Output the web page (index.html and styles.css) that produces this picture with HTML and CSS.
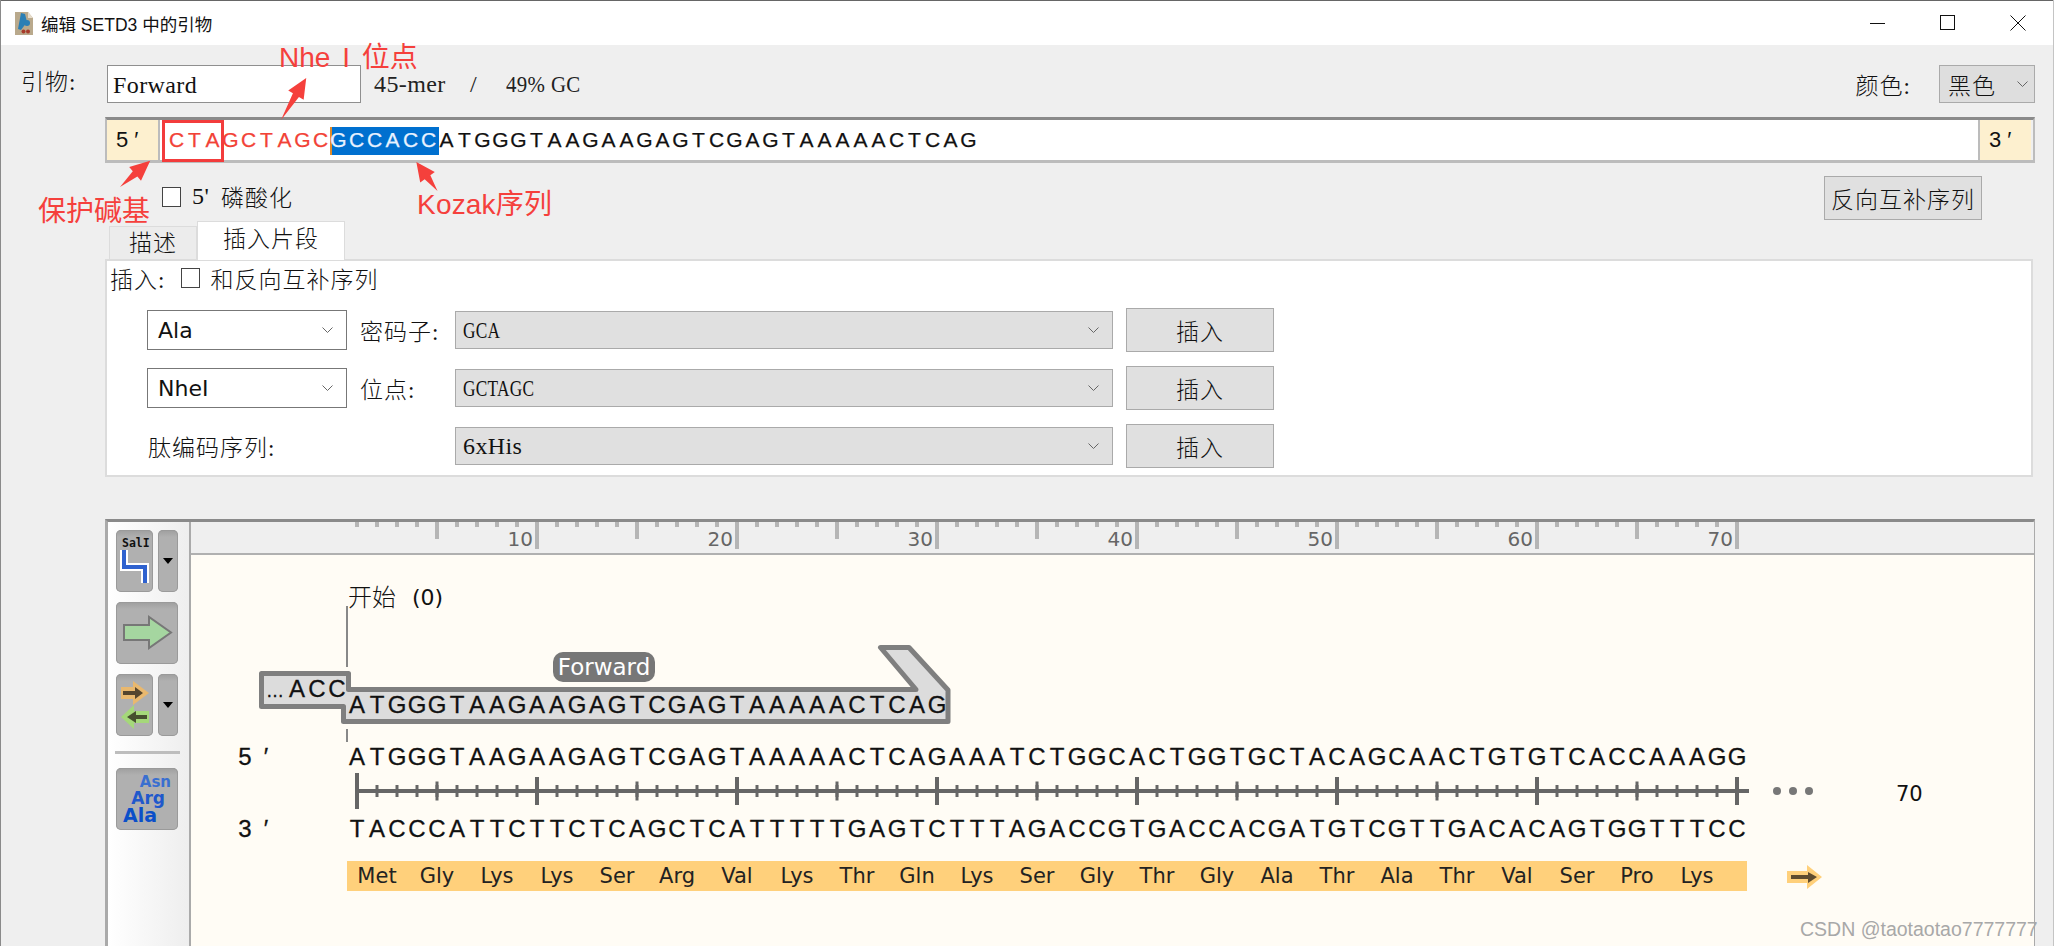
FILE: index.html
```html
<!DOCTYPE html>
<html lang="zh-CN">
<head>
<meta charset="utf-8">
<title>编辑 SETD3 中的引物</title>
<link rel="stylesheet" href="styles.css">
</head>
<body>
<div class="window">
  <header class="titlebar">
    <svg class="appicon" viewBox="15 10 18 23"><path d="M15 10h13l5 6v17H15z" fill="#b9a98c"/><path d="M28 10v6h5z" fill="#e6dccb"/><path d="M21 11l4 1 2 8-6 8-3-1z" fill="#2a7fb5"/><circle cx="27" cy="21" r="3" fill="#2a7fb5"/><circle cx="23.500" cy="29.500" r="2" fill="#a83a2a"/><circle cx="28" cy="29.500" r="2" fill="#a83a2a"/></svg>
    <span class="wintitle">编辑 SETD3 中的引物</span>
    <div class="winctl">
      <span class="winbtn"><svg viewBox="0 0 16 16"><path d="M0 8.500h15" class="glyph"/></svg></span>
      <span class="winbtn"><svg viewBox="0 0 16 16"><rect x="0.500" y="0.500" width="14" height="14" class="glyph"/></svg></span>
      <span class="winbtn"><svg viewBox="0 0 16 16"><path d="M0.500 0.500l15 15M15.500 0.500l-15 15" class="glyph"/></svg></span>
    </div>
  </header>

  <div class="toprow">
    <span class="zh toplabel">引物:</span>
    <div class="nameinput latin">Forward</div>
    <div class="meta latin"><span class="m1">45-mer</span><span class="m2">/</span><span class="cond87">49% GC</span></div>
    <span class="zh colorlabel">颜色:</span>
    <div class="colorselect"><span class="zh">黑色</span><svg class="chev" viewBox="0 0 11 6"><path d="M0.500 0.500l5 5 5-5"/></svg></div>
  </div>

  <div class="seqbar">
    <div class="endcell">5′</div>
    <svg class="seqmain" viewBox="160 120 1818 40">
      <rect x="331" y="127" width="108" height="28" class="selrect"/>
      <rect x="330" y="127" width="2" height="28" class="selcaret"/>
      <text y="147" class="barseq"><tspan class="red" x="176.500 194.500 212.500 230.500 248.500 266.500 284.500 302.500 320.500">CTAGCTAGC</tspan><tspan class="seltext" x="338.500 356.500 374.500 392.500 410.500 428.500">GCCACC</tspan><tspan x="446.500 464.500 482.500 500.500 518.500 536.500 554.500 572.500 590.500 608.500 626.500 644.500 662.500 680.500 698.500 716.500 734.500 752.500 770.500 788.500 806.500 824.500 842.500 860.500 878.500 896.500 914.500 932.500 950.500 968.500">ATGGGTAAGAAGAGTCGAGTAAAAACTCAG</tspan></text>
    </svg>
    <div class="endcell right">3′</div>
  </div>

  <div class="optrow">
    <span class="check"></span>
    <span class="latin phos">5'</span><span class="zh phoszh">磷酸化</span>
    <div class="btn revbtn zh">反向互补序列</div>
  </div>

  <div class="tabs">
    <div class="tab zh">描述</div>
    <div class="tab active zh">插入片段</div>
  </div>

  <section class="panel">
    <div class="insertrow">
      <span class="zh">插入:</span>
      <span class="check small"></span>
      <span class="zh">和反向互补序列</span>
    </div>
    <div class="insgrid">
      <div class="sel1 sans"><span>Ala</span><svg class="chev" viewBox="0 0 11 6"><path d="M0.500 0.500l5 5 5-5"/></svg></div>
      <span class="zh glabel">密码子:</span>
      <div class="sel2 latin"><span class="cond72">GCA</span><svg class="chev" viewBox="0 0 11 6"><path d="M0.500 0.500l5 5 5-5"/></svg></div>
      <div class="btn insbtn zh">插入</div>

      <div class="sel1 sans"><span>NheI</span><svg class="chev" viewBox="0 0 11 6"><path d="M0.500 0.500l5 5 5-5"/></svg></div>
      <span class="zh glabel">位点:</span>
      <div class="sel2 latin"><span class="cond72">GCTAGC</span><svg class="chev" viewBox="0 0 11 6"><path d="M0.500 0.500l5 5 5-5"/></svg></div>
      <div class="btn insbtn zh">插入</div>

      <span class="zh glabel wide">肽编码序列:</span>
      <div class="sel2 latin"><span>6xHis</span><svg class="chev" viewBox="0 0 11 6"><path d="M0.500 0.500l5 5 5-5"/></svg></div>
      <div class="btn insbtn zh">插入</div>
    </div>
  </section>

  <section class="map">
    <aside class="tools">
      <div class="toolrow">
        <div class="tool half">
          <svg viewBox="116 530 37 62">
            <text x="122" y="547" class="sal">SalI</text>
            <path d="M124 550v17h21v16" class="stepw"/>
            <path d="M124 550v17h21v16" class="stepb"/>
          </svg>
        </div>
        <div class="tool drop"><svg viewBox="0 0 10 6"><path d="M0 0h10l-5 6z"/></svg></div>
      </div>
      <div class="toolrow">
        <div class="tool full">
          <svg viewBox="116 602 62 62"><path d="M124 625h25v-8l22 15.500-22 15.500v-8h-25z" class="bigarrow"/></svg>
        </div>
      </div>
      <div class="toolrow">
        <div class="tool half">
          <svg viewBox="116 674 37 62">
            <path d="M121 687h12v-6l16 12-16 12v-6h-12z" class="oa"/>
            <path d="M123 691h12v-4l8 6-8 6v-4h-12z" class="oi"/>
            <path d="M149 711h-15v-6l-13 12 13 12v-6h15z" class="ga"/>
            <path d="M147 715h-11v-4l-9 6 9 6v-4h11z" class="gi"/>
          </svg>
        </div>
        <div class="tool drop"><svg viewBox="0 0 10 6"><path d="M0 0h10l-5 6z"/></svg></div>
      </div>
      <div class="toolsep"></div>
      <div class="toolrow">
        <div class="tool full">
          <svg viewBox="116 768 62 62">
            <text x="171" y="787" class="aa a1">Asn</text>
            <text x="165" y="804" class="aa a2">Arg</text>
            <text x="157" y="822" class="aa a3">Ala</text>
          </svg>
        </div>
      </div>
    </aside>
    <div class="mapmain">
      <svg class="ruler" viewBox="191 522 1843 31">
        <line x1="355" x2="1739" y1="524.500" y2="524.500" class="rt rt1"/>
        <line x1="435" x2="1739" y1="530.500" y2="530.500" class="rt rt5"/>
        <line x1="535" x2="1739" y1="535.500" y2="535.500" class="rt rt10"/>
        <text x="533" y="546" class="rl">10</text><text x="733" y="546" class="rl">20</text><text x="933" y="546" class="rl">30</text><text x="1133" y="546" class="rl">40</text><text x="1333" y="546" class="rl">50</text><text x="1533" y="546" class="rl">60</text><text x="1733" y="546" class="rl">70</text>
      </svg>
      <svg class="canvas" viewBox="191 555 1843 391">
        <text x="348" y="606" class="startlab">开始</text>
        <text x="412" y="605" class="startnum">(0)</text>
        <path d="M347 606v61M347 729v13" class="cursor"/>
        <path d="M261.500 673.500H348.500V689.500H916L880.500 647.500H909L948 690V721.500H343.500V706.500H261.500Z" class="feature"/>
        <text y="697" class="dna"><tspan x="275" class="ellip">…</tspan><tspan x="297 317 337">ACC</tspan></text>
        <text y="713" class="dna" x="357 377 397 417 437 457 477 497 517 537 557 577 597 617 637 657 677 697 717 737 757 777 797 817 837 857 877 897 917 937">ATGGGTAAGAAGAGTCGAGTAAAAACTCAG</text>
        <rect x="553" y="652" width="102" height="30" rx="10" class="pill"/>
        <text x="604" y="675" class="pilltext">Forward</text>

        <text y="765" class="dna" x="245 266">5′</text>
        <text y="765" class="dna" x="357 377 397 417 437 457 477 497 517 537 557 577 597 617 637 657 677 697 717 737 757 777 797 817 837 857 877 897 917 937 957 977 997 1017 1037 1057 1077 1097 1117 1137 1157 1177 1197 1217 1237 1257 1277 1297 1317 1337 1357 1377 1397 1417 1437 1457 1477 1497 1517 1537 1557 1577 1597 1617 1637 1657 1677 1697 1717 1737">ATGGGTAAGAAGAGTCGAGTAAAAACTCAGAAATCTGGCACTGGTGCTACAGCAACTGTGTCACCAAAGG</text>

        <line x1="357" x2="1749" y1="791" y2="791" class="axis"/>
        <line x1="375.500" x2="1739" y1="791" y2="791" class="at at1"/>
        <line x1="435.500" x2="1739" y1="791" y2="791" class="at at5"/>
        <line x1="535" x2="1739" y1="791" y2="791" class="at at10"/>
        <line x1="357" x2="357" y1="773" y2="809" class="at0"/>
        <circle cx="1777" cy="791" r="4" class="dot"/><circle cx="1793" cy="791" r="4" class="dot"/><circle cx="1809" cy="791" r="4" class="dot"/>
        <text x="1896" y="801" class="endnum">70</text>

        <text y="837" class="dna" x="245 266">3′</text>
        <text y="837" class="dna" x="357 377 397 417 437 457 477 497 517 537 557 577 597 617 637 657 677 697 717 737 757 777 797 817 837 857 877 897 917 937 957 977 997 1017 1037 1057 1077 1097 1117 1137 1157 1177 1197 1217 1237 1257 1277 1297 1317 1337 1357 1377 1397 1417 1437 1457 1477 1497 1517 1537 1557 1577 1597 1617 1637 1657 1677 1697 1717 1737">TACCCATTCTTCTCAGCTCATTTTTGAGTCTTTAGACCGTGACCACGATGTCGTTGACACAGTGGTTTCC</text>

        <rect x="347" y="861" width="1400" height="30" class="orf"/>
        <text y="883" class="aatext"><tspan x="377">Met</tspan><tspan x="437">Gly</tspan><tspan x="497">Lys</tspan><tspan x="557">Lys</tspan><tspan x="617">Ser</tspan><tspan x="677">Arg</tspan><tspan x="737">Val</tspan><tspan x="797">Lys</tspan><tspan x="857">Thr</tspan><tspan x="917">Gln</tspan><tspan x="977">Lys</tspan><tspan x="1037">Ser</tspan><tspan x="1097">Gly</tspan><tspan x="1157">Thr</tspan><tspan x="1217">Gly</tspan><tspan x="1277">Ala</tspan><tspan x="1337">Thr</tspan><tspan x="1397">Ala</tspan><tspan x="1457">Thr</tspan><tspan x="1517">Val</tspan><tspan x="1577">Ser</tspan><tspan x="1637">Pro</tspan><tspan x="1697">Lys</tspan></text>
        <path d="M1787 871h20v-6l15 12-15 12v-6h-20z" class="orfa"/>
        <path d="M1791 875h17v-3l9 5-9 6v-4h-17z" class="orfi"/>
      </svg>
    </div>
  </section>

  <div class="redbox"></div>
  <span class="note nhe">Nhe I 位点</span>
  <span class="note prot">保护碱基</span>
  <span class="note kozak">Kozak序列</span>
  <svg class="arrows" viewBox="0 0 2054 946">
    <polygon points="0,0 3.500,-29 9,-29 0,-49 -9,-29 -3.500,-29" transform="translate(281 120) rotate(31)"/>
    <polygon points="0,0 3.500,-20 9,-20 0,-40 -9,-20 -3.500,-20" transform="translate(120 187) rotate(49)"/>
    <polygon points="0,0 3.500,-17 9,-17 0,-36 -9,-17 -3.500,-17" transform="translate(437.500 191) rotate(-36)"/>
  </svg>
  <span class="watermark">CSDN @taotaotao7777777</span>
</div>
</body>
</html>
```

FILE: styles.css
```css
html, body {
  margin: 0;
  height: 946px;
  overflow: hidden;
}
* { box-sizing: border-box; }

.window {
  position: relative;
  width: 2054px;
  height: 946px;
  display: flex;
  flex-direction: column;
  background: #efefef;
  border-left: 1px solid #8a8a8a;
  border-right: 1px solid #c4c4c4;
  overflow: hidden;
  color: #111;
}

.zh {
  font-family: "Liberation Serif", "Noto Sans CJK SC", sans-serif;
  font-size: 23px;
  font-weight: 300;
  letter-spacing: 1px;
  white-space: pre;
}
.latin {
  font-family: "Liberation Serif", "Noto Sans CJK SC", serif;
  font-size: 24px;
  letter-spacing: 0.400px;
  white-space: pre;
}
.sans {
  font-family: "DejaVu Sans", sans-serif;
  font-size: 22px;
}
.cond87, .cond72 {
  display: inline-block;
  transform-origin: left center;
}
.cond87 { transform: scaleX(0.87); }
.cond72 { transform: scaleX(0.72); }

/* title bar */
.titlebar {
  height: 45px;
  flex: none;
  display: flex;
  align-items: center;
  background: #fff;
  border-top: 1px solid #666;
  padding-left: 14px;
}
.appicon { width: 18px; height: 23px; margin-right: 8px; }
.wintitle {
  font-family: "Liberation Sans", "Noto Sans CJK SC", sans-serif;
  font-size: 17.500px;
  color: #111;
}
.winctl { margin-left: auto; display: flex; }
.winbtn {
  width: 70px;
  display: flex;
  justify-content: center;
}
.winbtn svg { width: 16px; height: 16px; }
.glyph { fill: none; stroke: #111; stroke-width: 1; }

/* top row */
.toprow {
  display: flex;
  align-items: center;
  height: 38px;
  margin: 20px 18px 0 20px;
}
.toplabel { width: 86px; position: relative; top: -4px; }
.nameinput {
  width: 254px;
  height: 38px;
  line-height: 38px;
  background: #fff;
  border: 1px solid #8f8f8f;
  padding-left: 5px;
}
.meta { margin-left: 13px; color: #222; display: flex; }
.m1 { width: 96px; }
.m2 { width: 36px; }
.colorlabel { margin-left: auto; margin-right: 28px; }
.colorselect {
  width: 96px;
  height: 38px;
  background: #dedede;
  border: 1px solid #aaa;
  display: flex;
  align-items: center;
  padding-left: 8px;
  gap: 21px;
}
.chev { width: 11px; height: 6px; flex: none; }
.chev path { fill: none; stroke: #666; stroke-width: 1; }

/* sequence */
.seqbar {
  display: flex;
  height: 46px;
  margin: 14px 18px 0 104px;
  border-top: 3px solid #8a8a8a;
  border-bottom: 3px solid #bcbcbc;
  border-left: 2px solid #bcbcbc;
  border-right: 2px solid #bcbcbc;
}
.endcell {
  width: 53px;
  flex: none;
  background: #fdf0cf;
  border-right: 2px solid #bcbcbc;
  padding-left: 9px;
  line-height: 40px;
  font-family: "Liberation Sans", sans-serif;
  font-size: 22px;
  letter-spacing: 6px;
}
.endcell.right { border-right: 0; border-left: 2px solid #bcbcbc; }
.seqmain {
  display: block;
  width: 1818px;
  height: 40px;
  flex: none;
  background: #fff;
}
.selrect { fill: #0070cf; }
.selcaret { fill: #e08a2a; }
.barseq {
  font-family: "Liberation Sans", sans-serif;
  font-size: 21px;
  fill: #111;
  stroke: #111;
  stroke-width: 0.250px;
  text-anchor: middle;
}
.red { fill: #f24236; stroke: #f24236; }
.seltext { fill: #e8f2ff; stroke: #e8f2ff; }

/* options */
.optrow {
  height: 58px;
  flex: none;
  display: flex;
  align-items: flex-start;
  padding: 0 71px 0 161px;
}
.check {
  width: 19px;
  height: 20px;
  border: 1px solid #444;
  background: #fff;
  margin-top: 24px;
  flex: none;
}
.phos { margin: 20px 0 0 11px; width: 29px; }
.phoszh { margin-top: 16px; }
.btn {
  display: flex;
  align-items: center;
  justify-content: center;
  background: #e0e0e0;
  border: 1px solid #aaa;
}
.revbtn { margin-left: auto; margin-top: 13px; width: 158px; height: 44px; }

/* tabs */
.tabs {
  display: flex;
  align-items: flex-end;
  height: 38px;
  flex: none;
  margin-left: 108px;
  position: relative;
  z-index: 1;
}
.tab {
  width: 88px;
  height: 33px;
  background: #ececec;
  border: 1px solid #dcdcdc;
  border-bottom: 0;
  text-align: center;
  line-height: 33px;
}
.tab.active {
  width: 148px;
  height: 39px;
  background: #fff;
  line-height: 36px;
  margin-bottom: -1px;
}

/* panel */
.panel {
  height: 218px;
  flex: none;
  margin: 0 20px 0 104px;
  background: #fff;
  border: 2px solid #dcdcdc;
  padding-left: 40px;
}
.insertrow {
  display: flex;
  align-items: center;
  height: 34px;
  margin: 0 0 13px -37px;
}
.insertrow .check { margin: 0 10px 0 16px; }
.insgrid {
  display: grid;
  grid-template-columns: 200px 108px 658px 13px 148px;
  grid-auto-rows: 44px;
  row-gap: 14px;
  align-items: center;
}
.sel1, .sel2 {
  display: flex;
  align-items: center;
  justify-content: space-between;
}
.sel1 {
  height: 40px;
  background: #fff;
  border: 1px solid #777;
  padding: 0 13px 0 10px;
}
.sel2 {
  grid-column: 3;
  height: 38px;
  background: #e0e0e0;
  border: 1px solid #aaa;
  padding: 0 13px 0 7px;
}
.glabel { padding-left: 13px; }
.glabel.wide { grid-column: 1 / 3; padding-left: 1px; }
.insbtn { grid-column: 5; height: 44px; }

/* map */
.map {
  flex: 1;
  display: flex;
  margin: 42px 18px 0 104px;
  border-top: 3px solid #8a8a8a;
  border-left: 3px solid #aaa;
  border-right: 2px solid #aaa;
  min-height: 0;
}
.tools {
  width: 83px;
  flex: none;
  border-right: 2px solid #aaa;
  background: linear-gradient(90deg, #fff, #eee);
  padding: 8px 0 0 8px;
}
.toolrow { display: flex; gap: 5px; margin-bottom: 10px; }
.tool {
  height: 62px;
  border-radius: 5px;
  background: linear-gradient(#9e9e9e, #b0b0b0 7px);
  box-shadow: inset 0 0 0 1px #9a9a9a;
}
.tool svg { display: block; width: 100%; height: 100%; }
.tool.half { width: 37px; }
.tool.full { width: 62px; }
.tool.drop { width: 20px; display: flex; align-items: center; justify-content: center; }
.tool.drop svg { width: 10px; height: 6px; }
.toolsep {
  width: 65px;
  height: 3px;
  background: #bdbdbd;
  margin: 15px 0 14px -1px;
}
.sal { font: bold 11.500px "DejaVu Sans Mono", monospace; fill: #111; }
.stepw { fill: none; stroke: #fff; stroke-width: 8; }
.stepb { fill: none; stroke: #2f62cf; stroke-width: 4; }
.bigarrow { fill: #a5d6a0; stroke: #777; stroke-width: 2; }
.oa { fill: #e9b86e; }
.oi { fill: #54452e; }
.ga { fill: #a5d87a; }
.gi { fill: #47502f; }
.aa { font-family: "DejaVu Sans", sans-serif; font-weight: bold; text-anchor: end; }
.a1 { font-size: 15px; fill: #3a6fd0; }
.a2 { font-size: 17px; fill: #2058cc; }
.a3 { font-size: 19px; fill: #0b4fc9; }

.mapmain { flex: 1; display: flex; flex-direction: column; min-width: 0; }
.ruler {
  display: block;
  width: 1843px;
  height: 33px;
  flex: none;
  background: #efefef;
  border-bottom: 2px solid #b0b0b0;
}
.rt { stroke: #b5b5b5; stroke-width: 4; }
.rt1 { stroke-width: 5; stroke-dasharray: 4 16; }
.rt5 { stroke-width: 17; stroke-dasharray: 4 96; }
.rt10 { stroke-width: 27; stroke-dasharray: 4 196; }
.rl {
  font-family: "DejaVu Sans", sans-serif;
  font-size: 20px;
  fill: #666;
  text-anchor: end;
}
.canvas {
  display: block;
  width: 1843px;
  height: 391px;
  flex: none;
  background: #fffcf5;
}
.startlab {
  font-family: "Noto Sans CJK SC", sans-serif;
  font-size: 24px;
  font-weight: 300;
  fill: #111;
}
.startnum { font-family: "DejaVu Sans", sans-serif; font-size: 22px; fill: #111; }
.cursor { stroke: #888; stroke-width: 2; fill: none; }
.feature { fill: #dcdcdc; stroke: #7f7f7f; stroke-width: 5; stroke-linejoin: round; }
.dna {
  font-family: "Liberation Sans", sans-serif;
  font-size: 24px;
  fill: #111;
  stroke: #111;
  stroke-width: 0.300px;
  text-anchor: middle;
}
.ellip { font-size: 18px; }
.pill { fill: #777; }
.pilltext {
  font-family: "DejaVu Sans", sans-serif;
  font-size: 23px;
  fill: #fff;
  text-anchor: middle;
}
.axis { stroke: #666; stroke-width: 4; }
.at { stroke: #666; }
.at1 { stroke-width: 12; stroke-dasharray: 3 17; }
.at5 { stroke-width: 19; stroke-dasharray: 3 97; }
.at10 { stroke-width: 28; stroke-dasharray: 4 196; }
.at0 { stroke: #666; stroke-width: 4; }
.dot { fill: #777; }
.endnum { font-family: "DejaVu Sans", sans-serif; font-size: 21px; fill: #111; }
.orf { fill: #ffd07b; }
.aatext {
  font-family: "DejaVu Sans", sans-serif;
  font-size: 21px;
  fill: #222;
  text-anchor: middle;
}
.orfa { fill: #ffd07b; }
.orfi { fill: #5f4c2f; }

/* annotations over the window */
.redbox {
  position: absolute;
  left: 161px;
  top: 120px;
  width: 62px;
  height: 42px;
  border: 3px solid #f33c3c;
}
.note {
  position: absolute;
  font-family: "Liberation Sans", "Noto Sans CJK SC", sans-serif;
  color: #f5403c;
  line-height: 1;
  white-space: pre;
}
.nhe { left: 278px; top: 44px; font-size: 28px; word-spacing: 4px; }
.prot { left: 37px; top: 198px; font-size: 28px; }
.kozak { left: 416px; top: 191px; font-size: 28px; letter-spacing: 0.200px; }
.arrows {
  position: absolute;
  left: -1px;
  top: 0;
  width: 2054px;
  height: 946px;
  pointer-events: none;
}
.arrows polygon { fill: #f5403c; }
.watermark {
  position: absolute;
  left: 1799px;
  top: 918px;
  font-family: "Liberation Sans", sans-serif;
  font-size: 19.500px;
  color: #a8a8a8;
  white-space: pre;
}
```
